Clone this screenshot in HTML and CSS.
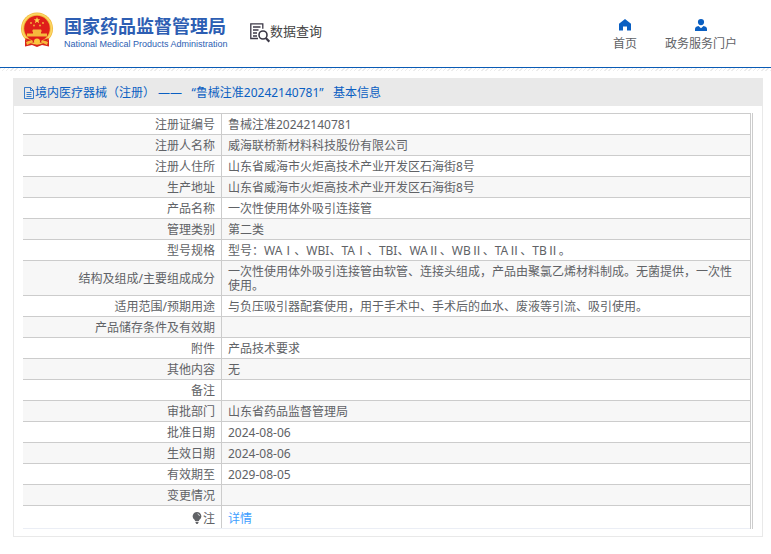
FILE: index.html
```html
<!DOCTYPE html>
<html lang="zh-CN">
<head>
    <meta charset="UTF-8">
    <meta name="viewport" content="width=device-width, initial-scale=1.0">
    <title>国家药品监督管理局 数据查询</title>
    <link rel="stylesheet" href="styles.css">
</head>
<body>

    <header class="header">
        <a class="logo" href="#">
            <svg class="emblem" viewBox="0 0 34 36" aria-hidden="true">
                <path d="M5 26L5 34.500L12 33L17 35L22 33L29 34.500L29 26Z" fill="#d9241c"/>
                <circle cx="17" cy="16.500" r="16" fill="#f2b83a"/>
                <circle cx="17" cy="16.500" r="14.500" fill="none" stroke="#fbd766" stroke-width="1.500"/>
                <circle cx="17" cy="16.500" r="12.800" fill="#df1f1a"/>
                <path d="M17 5l.9 2.300h2.400l-1.900 1.500.7 2.400-2.100-1.400-2.100 1.400.7-2.400-1.900-1.500h2.400z" fill="#fbd24a"/>
                <g fill="#f6b93c">
                    <circle cx="11" cy="11" r=".9"/>
                    <circle cx="23" cy="11" r=".9"/>
                    <circle cx="14" cy="13.500" r=".9"/>
                    <circle cx="20" cy="13.500" r=".9"/>
                    <path d="M13 17.500h8l1 2h-1v2h6v3H7v-3h6v-2h-1z"/>
                </g>
                <path d="M5 26Q17 31 29 26L27 29Q17 33 7 29Z" fill="#d9241c"/>
                <circle cx="17" cy="29.500" r="3" fill="#fbc83f"/>
                <path d="M6 30l6-2 1 2-6 3zM28 30l-6-2-1 2 6 3z" fill="#f6b93c"/>
            </svg>
            <span class="logo-text">
                <span class="logo-cn">国家药品监督管理局</span>
                <span class="logo-en">National Medical Products Administration</span>
            </span>
        </a>
        <div class="section-name">
            <svg class="search-icon" viewBox="0 0 20 20" aria-hidden="true">
                <g fill="none" stroke="#3c3947" stroke-width="1.300">
                    <path d="M8 15.500H.8V.8h12v5"/>
                    <path d="M3 4h7.500M3 7h5.500M3 10h4M3 13h4"/>
                    <circle cx="13" cy="12" r="4" stroke-width="1.600"/>
                    <path d="M15.800 15l3.500 3.700" stroke-width="2.200"/>
                </g>
            </svg>
            <span>数据查询</span>
        </div>
        <nav class="nav">
            <a href="#">
                <svg viewBox="0 0 12 12" aria-hidden="true"><path d="M6 0l6 4.800V11.500H8V7.500H4v4H0V4.800z" fill="#0a5fc2"/></svg>
                首页
            </a>
            <a href="#">
                <svg viewBox="0 0 12 12" aria-hidden="true"><path d="M6 0a3 3 0 0 1 0 6.200A3 3 0 0 1 6 0zM0 12V10Q0 7.500 3.500 7L6 9.300 8.500 7Q12 7.500 12 10v2z" fill="#0a5fc2"/></svg>
                政务服务门户
            </a>
        </nav>
    </header>
    <div class="strip"></div>

    <main class="panel">
        <h1 class="panel-title">
            <svg viewBox="0 0 12 12" aria-hidden="true"><path d="M1.500.500h6l3 3v8h-9zM7.500.500v3h3M3.500 5.500h5M3.500 7.500h5M3.500 9.500h5" fill="none" stroke="#0a5fc2" stroke-width=".8"/></svg>
            <span>境内医疗器械（注册） ——&nbsp;&nbsp; “鲁械注准20242140781”&nbsp;&nbsp; 基本信息</span>
        </h1>
        <div class="table-wrap">
            <table>
                <tbody>
                    <tr><th scope="row">注册证编号</th><td>鲁械注准20242140781</td></tr>
                    <tr><th scope="row">注册人名称</th><td>威海联桥新材料科技股份有限公司</td></tr>
                    <tr><th scope="row">注册人住所</th><td>山东省威海市火炬高技术产业开发区石海街8号</td></tr>
                    <tr><th scope="row">生产地址</th><td>山东省威海市火炬高技术产业开发区石海街8号</td></tr>
                    <tr><th scope="row">产品名称</th><td>一次性使用体外吸引连接管</td></tr>
                    <tr><th scope="row">管理类别</th><td>第二类</td></tr>
                    <tr><th scope="row">型号规格</th><td>型号：WAⅠ、WBI、TAⅠ、TBI、WAⅡ、WBⅡ、TAⅡ、TBⅡ。</td></tr>
                    <tr><th scope="row">结构及组成/主要组成成分</th><td>一次性使用体外吸引连接管由软管、连接头组成，产品由聚氯乙烯材料制成。无菌提供，一次性使用。</td></tr>
                    <tr><th scope="row">适用范围/预期用途</th><td>与负压吸引器配套使用，用于手术中、手术后的血水、废液等引流、吸引使用。</td></tr>
                    <tr><th scope="row">产品储存条件及有效期</th><td></td></tr>
                    <tr><th scope="row">附件</th><td>产品技术要求</td></tr>
                    <tr><th scope="row">其他内容</th><td>无</td></tr>
                    <tr><th scope="row">备注</th><td></td></tr>
                    <tr><th scope="row">审批部门</th><td>山东省药品监督管理局</td></tr>
                    <tr><th scope="row">批准日期</th><td>2024-08-06</td></tr>
                    <tr><th scope="row">生效日期</th><td>2024-08-06</td></tr>
                    <tr><th scope="row">有效期至</th><td>2029-08-05</td></tr>
                    <tr><th scope="row">变更情况</th><td></td></tr>
                    <tr class="note">
                        <th scope="row"><svg class="bulb" viewBox="0 0 10 12" aria-hidden="true"><path d="M5 0a4.300 4.300 0 0 1 2.500 7.800L6.800 9H3.200L2.500 7.800A4.300 4.300 0 0 1 5 0zM3.500 9.800h3v1L5.500 12h-1l-1-1.200z" fill="#606266"/><path d="M5.500 1.800Q7.300 2.200 7.500 4" fill="none" stroke="#fff" stroke-width=".7"/></svg>注</th>
                        <td><a href="#">详情</a></td>
                    </tr>
                </tbody>
            </table>
        </div>
    </main>

</body>
</html>
```
FILE: styles.css
```css
body{
    margin: 0;
    background: #fff;
    color: #606266;
    font-family: "Noto Sans", "Noto Sans CJK SC", sans-serif;
    font-size: 12px;
    line-height: 14px;
}
a{
    color: inherit;
    text-decoration: none;
}

/* header */
.header{
    display: flex;
    align-items: flex-start;
    height: 67px;
    padding: 0 34px 0 20px;
    border-bottom: 1px solid #0a5bb5;
}
.strip{
    height: 3px;
    background: repeating-linear-gradient(135deg, #ececec 0 1px, #fff 1px 3px);
}
.logo{
    display: flex;
    gap: 10px;
    padding-top: 12px;
    color: #2d5eb3;
}
.emblem{
    width: 34px;
    height: 36px;
}
.logo-text{
    display: flex;
    flex-direction: column;
    width: 160px;
    padding-top: 3px;
    white-space: nowrap;
}
.logo-cn{
    font-size: 18px;
    font-weight: 700;
    line-height: 22px;
}
.logo-en{
    font-family: "Liberation Sans", Arial, sans-serif;
    font-size: 9px;
    line-height: 14px;
}
.section-name{
    display: flex;
    margin-left: 26px;
    padding-top: 20px;
    color: #444;
    font-size: 13px;
    line-height: 22px;
}
.search-icon{
    width: 20px;
    height: 20px;
    margin-top: 3px;
}
.nav{
    display: flex;
    gap: 28px;
    margin-left: auto;
    padding-top: 19px;
}
.nav a{
    display: flex;
    flex-direction: column;
    align-items: center;
    gap: 6px;
    line-height: 14px;
}
.nav svg{
    width: 12px;
    height: 12px;
}

/* panel */
.panel{
    margin: 7px 8px 0 13px;
    padding-bottom: 7px;
    border: 1px solid #e9e9e9;
    border-top: 0;
}
.panel-title{
    display: flex;
    align-items: center;
    margin: 0 0 7px;
    padding: 8px 9px 6px;
    background: #e9e9e9;
    color: #0a5fc2;
    font-size: 12px;
    font-weight: 400;
}
.panel-title svg{
    width: 12px;
    height: 12px;
}
.table-wrap{
    margin: 0 9px;
    border-right: 3px double #ccc;
}
table{
    width: 100%;
    border-collapse: separate;
    border-spacing: 0;
    border-bottom: 1px solid #ebeef5;
}
th, td{
    height: 14px;
    padding: 4px 6px 2px;
    border-top: 1px solid #ccc;
    font-weight: 400;
    text-align: left;
}
td{
    padding-right: 16px;
}
th{
    width: 186px;
    border-right: 1px solid #ccc;
    text-align: right;
}
tr:nth-child(even){
    background: #f7f7f7;
}
.note th, .note td{
    padding-top: 6px;
    padding-bottom: 2px;
}
.note a{
    color: #409eff;
}
.bulb{
    width: 10px;
    height: 12px;
    margin-right: 1px;
    vertical-align: -1px;
}
```
